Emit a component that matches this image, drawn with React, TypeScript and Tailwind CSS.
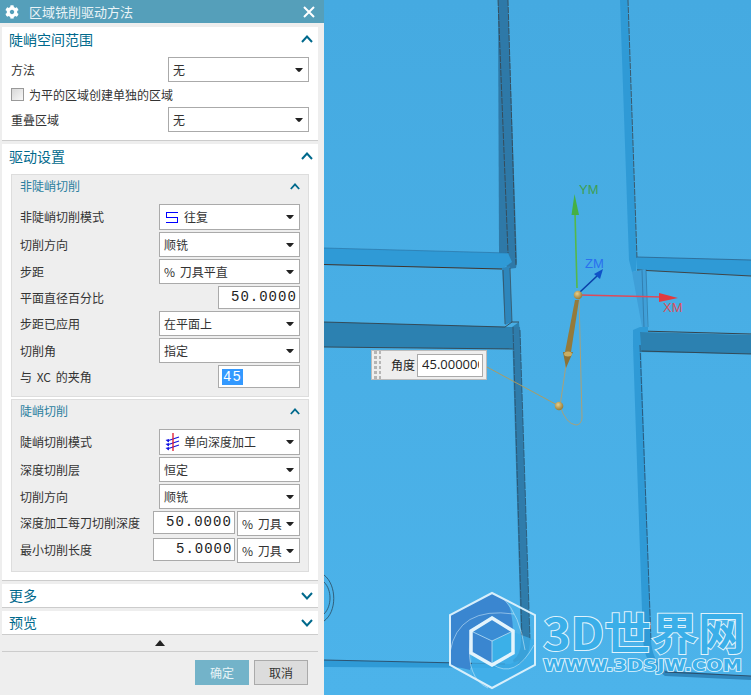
import React from 'react';
import { FaCog } from 'react-icons/fa';

const Chevron = ({ up = true, small = false }: { up?: boolean; small?: boolean }) => (
  <svg width={small ? 10 : 12} height={small ? 7 : 8} viewBox="0 0 12 8" fill="none" stroke="#00698c" strokeWidth={small ? 2.2 : 2}>
    <polyline points={up ? '1,7 6,1.5 11,7' : '1,1 6,6.5 11,1'} />
  </svg>
);

const Caret = () => (
  <svg width="8" height="4" viewBox="0 0 8 4" className="shrink-0">
    <path d="M0 0H8L5 3.6Q4 4.2 3 3.6Z" fill="#222" />
  </svg>
);

const ZigzagIcon = () => (
  <svg width="12" height="11" viewBox="0 0 12 11" className="ml-[2px] mr-[6px] shrink-0" fill="none" stroke="#0000ff" strokeWidth="1" shapeRendering="crispEdges">
    <path d="M12 0.5H0.5V5.5H11.5V10.5H0" />
  </svg>
);

const ProfileIcon = () => (
  <svg width="15" height="18" viewBox="0 0 15 18" className="ml-[1px] mr-[4px] shrink-0" fill="none">
    <path d="M2 8L14 4M2 12L14 8M2 16L14 12" stroke="#1414e0" strokeWidth="1.2" />
    <path d="M0.5 7L4 6V9.5ZM0.5 11L4 10V13.5ZM0.5 15L4 14V17.5Z" fill="#1414e0" />
    <path d="M8 0V18" stroke="#e0142a" strokeWidth="1.3" />
  </svg>
);

const Select = ({ value, icon, className = 'w-[141px]', first = false }: { value: string; icon?: React.ReactNode; className?: string; first?: boolean }) => (
  <div className={`${className} ${first ? 'h-[26px]' : 'h-[25px]'} flex items-center bg-white border border-[#aaaaaa] pl-[4px] pr-[5px] shrink-0`}>
    {icon}
    <span className="flex-1 text-[12px] text-[#333] whitespace-nowrap [word-spacing:2px]">{value}</span>
    <Caret />
  </div>
);

const NumberInput = ({ value, offset, className = 'w-[82px]' }: { value: string; offset: string; className?: string }) => (
  <div className={`${className} h-[23px] bg-white border border-[#aaaaaa] pr-[2px] shrink-0`}>
    <div className={`${offset} h-full flex items-center overflow-hidden`}>
      <span className="font-['Liberation_Mono',monospace] text-[14px] tracking-[1px] text-[#222] whitespace-nowrap">{value}</span>
    </div>
  </div>
);

const Row = ({ label, children, top = false }: { label: string; children: React.ReactNode; top?: boolean }) => (
  <div className={`flex justify-between ${top ? 'items-start' : 'items-center'}`}>
    <span className={`text-[12px] text-[#333] whitespace-nowrap [word-spacing:2px] ${top ? 'leading-[23px]' : ''}`}>{label}</span>
    {children}
  </div>
);

const SectionHeader = ({ title, up = true, className = 'h-[30px] pb-[6px]' }: { title: string; up?: boolean; className?: string }) => (
  <div className={`${className} flex items-center justify-between pl-[7px] pr-[5px]`}>
    <span className="text-[14px] text-[#00698c]">{title}</span>
    <Chevron up={up} />
  </div>
);

const Group = ({ title, children }: { title: string; children: React.ReactNode }) => (
  <div className="bg-[#eeeeee] border border-[#dddddd] mx-[9px] px-[8px] pb-[8px]">
    <div className="h-[29px] pb-[7px] flex items-center justify-between">
      <span className="text-[12px] text-[#2b7f9f]">{title}</span>
      <Chevron small />
    </div>
    <div className="flex flex-col gap-[2px]">{children}</div>
  </div>
);

const Panel = () => (
  <div className="w-[324px] h-full shrink-0 bg-[#eeeeee] flex flex-col font-['Noto_Sans_CJK_SC','Noto_Sans',sans-serif]">
    {/* Title bar */}
    <div className="h-[23px] bg-[#559fba] flex items-center pl-[5px] pr-[9px] text-white shrink-0">
      <FaCog size={14} color="#ffffff" />
      <span className="ml-[10px] flex-1 text-[13px] text-[#eaf4f7]">区域铣削驱动方法</span>
      <svg width="12" height="12" viewBox="0 0 12 12" stroke="#ffffff" strokeWidth="2">
        <path d="M1 1L11 11M11 1L1 11" />
      </svg>
    </div>

    {/* 陡峭空间范围 */}
    <div className="mt-[4px] mx-[2px] w-[316px] h-[114px] bg-white border-b border-[#cccccc] shrink-0">
      <SectionHeader title="陡峭空间范围" />
      <div className="px-[9px]">
        <Row label="方法"><Select value="无" /></Row>
        <div className="h-[25px] flex items-center">
          <div className="w-[13px] h-[13px] border border-[#999999] bg-gradient-to-br from-[#d8d8d8] to-[#f8f8f8]" />
          <span className="ml-[5px] text-[12px] text-[#333]">为平的区域创建单独的区域</span>
        </div>
        <Row label="重叠区域"><Select value="无" /></Row>
      </div>
    </div>

    {/* 驱动设置 */}
    <div className="mt-[3px] mx-[2px] w-[316px] bg-white border-b border-[#cccccc] pb-[8px] shrink-0">
      <SectionHeader title="驱动设置" />
      <div className="flex flex-col gap-[2px]">
        <Group title="非陡峭切削">
          <Row label="非陡峭切削模式"><Select first value="往复" icon={<ZigzagIcon />} /></Row>
          <Row label="切削方向"><Select value="顺铣" /></Row>
          <Row label="步距"><Select value="% 刀具平直" /></Row>
          <Row label="平面直径百分比"><NumberInput value="50.00000" offset="pl-[12px]" /></Row>
          <Row label="步距已应用"><Select value="在平面上" /></Row>
          <Row label="切削角"><Select value="指定" /></Row>
          <Row label="与 XC 的夹角">
            <div className="w-[82px] h-[23px] bg-white border border-[#aaaaaa] flex items-center pl-[3px] shrink-0">
              <span className="bg-[#3399ff] text-white font-['Liberation_Mono',monospace] text-[14px] tracking-[1px] leading-[16px] px-[1px]">45</span>
            </div>
          </Row>
        </Group>
        <Group title="陡峭切削">
          <Row label="陡峭切削模式"><Select first value="单向深度加工" icon={<ProfileIcon />} /></Row>
          <Row label="深度切削层"><Select value="恒定" /></Row>
          <Row label="切削方向"><Select value="顺铣" /></Row>
          <Row top label="深度加工每刀切削深度">
            <div className="flex gap-[2px]">
              <NumberInput value="50.00000" offset="pl-[12px]" />
              <Select value="% 刀具" className="w-[63px]" />
            </div>
          </Row>
          <Row top label="最小切削长度">
            <div className="flex gap-[2px]">
              <NumberInput value="5.00000" offset="pl-[22px]" />
              <Select value="% 刀具" className="w-[63px]" />
            </div>
          </Row>
        </Group>
      </div>
    </div>

    {/* Collapsed sections */}
    <div className="mt-[3px] mx-[2px] w-[316px] bg-white border-b border-[#cccccc] shrink-0">
      <SectionHeader title="更多" up={false} className="h-[23px]" />
    </div>
    <div className="mt-[3px] mx-[2px] w-[316px] bg-white border-b border-[#cccccc] shrink-0">
      <SectionHeader title="预览" up={false} className="h-[23px]" />
    </div>

    <div className="h-[17px] mx-[2px] w-[316px] flex items-center justify-center border-b border-[#cccccc] shrink-0">
      <svg width="10" height="6" viewBox="0 0 10 6"><path d="M5 0L10 6H0Z" fill="#222" /></svg>
    </div>

    {/* Buttons */}
    <div className="mt-[8px] flex justify-end gap-[5px] pr-[16px]">
      <div className="w-[54px] h-[25px] bg-[#73b3c9] flex items-center justify-center text-[12px] text-[#e8f3f7]">确定</div>
      <div className="w-[54px] h-[25px] bg-[#dcdcdc] border border-[#aaaaaa] flex items-center justify-center text-[12px] text-[#333]">取消</div>
    </div>
  </div>
);

// CAD part and manipulator, viewBox keeps the screenshot's own x values
const Model = () => (
  <svg width="427" height="695" viewBox="324 0 427 695" className="absolute inset-0">
    <defs>
      <linearGradient id="sky" x1="0" y1="0" x2="0" y2="1">
        <stop offset="0" stopColor="#45aae1" />
        <stop offset="1" stopColor="#4cb3ea" />
      </linearGradient>
      <radialGradient id="ball" cx="0.4" cy="0.35" r="0.7">
        <stop offset="0" stopColor="#e8cf8a" />
        <stop offset="1" stopColor="#8f7430" />
      </radialGradient>
    </defs>
    <rect x="324" y="0" width="427" height="695" fill="url(#sky)" />

    {/* left channel */}
    <path d="M498 0H508L517 262L516 268L508 269L499 253Z" fill="#2e79a8" />
    <path d="M498 0L508 253M508 0L516 265" stroke="#3a3a3a" strokeWidth="0.7" strokeDasharray="6 1" fill="none" />
    <path d="M324 248L508 253L512 262L502 269L324 265Z" fill="#2f9ad6" />
    <path d="M324 264.5L502 269" stroke="#40352e" strokeWidth="1" />
    <path d="M324 248L508 253" stroke="#2a6f9e" strokeWidth="0.6" />
    <path d="M502 268L510 266L512 322L505 325Z" fill="#2d86bc" />
    <path d="M503 270L505 324M510 268L512 322" stroke="#3a3a3a" strokeWidth="0.6" fill="none" />

    <path d="M324 322L512 327L519 322L521 349L324 347Z" fill="#2c81b1" />
    <path d="M324 322L505 327L512 322H519M324 347L513 349" stroke="#33383c" strokeWidth="0.8" fill="none" />
    <path d="M512 327H520L530 640Q530 660 515 667L513 660Q521 655 521 640Z" fill="#2f7cab" />
    <path d="M513 327L522 640M520 330L530 640" stroke="#2b4a60" strokeWidth="0.7" strokeDasharray="7 1" fill="none" />
    <path d="M324 660L510 664L520 660L515 668L324 667Z" fill="#2f9ad6" />
    <path d="M324 660L505 664" stroke="#2a3f55" strokeWidth="0.8" />

    {/* right channel */}
    <path d="M620 0H628L637 258L636 271L632 272L629 260Z" fill="#2f9ad6" />
    <path d="M628 0L637 258" stroke="#3d3a3a" strokeWidth="0.7" strokeDasharray="6 1" fill="none" />
    <path d="M637 257L751 260V276L637 270Z" fill="#2f9ad6" />
    <path d="M637 257L751 260" stroke="#2b5a80" strokeWidth="0.7" />
    <path d="M637 270L751 276" stroke="#3f3a36" strokeWidth="0.9" />
    <path d="M632 272L646 269L647 327L642 327Z" fill="#3f9fd8" />
    <path d="M642 270L644 328M646 269L648 327" stroke="#2a6a96" strokeWidth="0.6" fill="none" />
    <path d="M640 332L751 335V354L640 352Z" fill="#2c81b1" />
    <path d="M640 331L751 334" stroke="#33383c" strokeWidth="0.9" />
    <path d="M640 351L751 354" stroke="#33383c" strokeWidth="0.8" />
    <path d="M633 330L640 327L648 327V332L640 332L641 345L651 640Q652 660 665 670L660 673Q645 665 643 640L633 345Z" fill="#2f9ad6" />
    <path d="M640 345L651 640" stroke="#2b3f55" strokeWidth="0.7" strokeDasharray="7 1" fill="none" />
    <path d="M657 670L751 676V680L665 676Z" fill="#2f86bc" />
    <path d="M665 672L751 676" stroke="#2a3f55" strokeWidth="0.8" />

    {/* arc at the panel edge */}
    <path d="M324 575C337 585 337 612 324 621M324 582C332 590 332 606 324 614" stroke="#2b4a60" strokeWidth="0.8" fill="none" />

    {/* angle handle */}
    <path d="M487 367L559 406" stroke="#b79a55" strokeWidth="0.9" />
    <path d="M566 365L560 406Q566 424 576 425Q581 425 582 418L579 298" stroke="#a8a17a" strokeWidth="1" fill="none" />
    <path d="M575 300H579L571 352H565Z" fill="#957a3a" />
    <path d="M563 352H573L566 368Z" fill="#8d7234" />
    <ellipse cx="568" cy="354" rx="4" ry="2.5" fill="#c9ad62" />

    {/* YM */}
    <path d="M577 288L575 213" stroke="#55b848" strokeWidth="1.6" />
    <path d="M574.5 194L579 215H571.5Z" fill="#45b044" />
    <text x="579" y="194" fontSize="13" fill="#3f9f52" fontFamily="Liberation Sans, sans-serif">YM</text>
    {/* ZM */}
    <path d="M580 292L597 276" stroke="#0a3fa8" strokeWidth="1.5" />
    <path d="M603 269L600 279L594 274Z" fill="#0f52c8" />
    <text x="585" y="268" fontSize="13" fill="#2a70ee" fontFamily="Liberation Sans, sans-serif">ZM</text>
    {/* XM */}
    <path d="M580 295L662 297" stroke="#de4a5a" strokeWidth="1.6" />
    <path d="M678 298L659 302V293Z" fill="#e23a3e" />
    <text x="663" y="312" fontSize="13" fill="#d9505c" fontFamily="Liberation Sans, sans-serif">XM</text>

    <circle cx="578" cy="295" r="4.3" fill="url(#ball)" />
    <circle cx="559" cy="406" r="4.3" fill="url(#ball)" />
  </svg>
);

// 3D世界网 watermark
const Watermark = () => (
  <svg width="306" height="105" viewBox="445 590 306 105" className="absolute left-[121px] top-[590px]">
    <path d="M513 632L535 640V665L492 688L472 677L472 655L492 666Z" fill="#3eaee8" fillOpacity="0.75" />
    <path d="M492 593L450 615V665L470 670L470 630L492 616L513 630Q512 606 505 600Z" fill="#3a86d0" />
    <path d="M492 593L535 615V665L492 688L450 665V615Z" fill="none" stroke="#d8effb" strokeWidth="2" />
    <path d="M503 598Q520 615 525 650M450 652Q458 606 514 614M470 640Q466 678 488 688M492 664Q515 680 534 645" stroke="#d8effb" strokeWidth="0.8" fill="none" opacity="0.65" />
    <path d="M492 641L513 631V653L492 665Z" fill="#3bb0e8" />
    <path d="M492 641L471 631V653L492 665Z" fill="#3a86d0" />
    <path d="M492 641L513 631L492 618L471 631Z" fill="#3a8cd4" />
    <path d="M492 641L513 631M492 641L471 631M492 641V665" stroke="#cbe8f8" strokeWidth="0.7" />
    <path d="M492 618L513 631V653L492 665L471 653V631Z" fill="none" stroke="#e4f4fc" strokeWidth="3.5" />
    <text x="543" y="650" fontSize="44" fontWeight="700" fill="#3aaee8" stroke="#dff2fc" strokeWidth="2" paintOrder="stroke" fontFamily="Noto Sans CJK SC, sans-serif" textLength="202" lengthAdjust="spacingAndGlyphs">3D世界网</text>
    <text x="543" y="671" fontSize="15" fontWeight="700" fill="#3aaee8" stroke="#dff2fc" strokeWidth="1.6" paintOrder="stroke" fontFamily="DejaVu Sans, sans-serif" textLength="199" lengthAdjust="spacingAndGlyphs">WWW.3DSJW.COM</text>
  </svg>
);

const AnglePopup = () => (
  <div className="absolute left-[47px] top-[350px] w-[116px] h-[30px] bg-[#eeeeee] border border-[#bbbbbb] flex items-center pl-[2px] pr-[3px] font-['Noto_Sans_CJK_SC',sans-serif]">
    <div className="grid grid-cols-2 gap-[2px] w-[7px] mr-[10px] shrink-0">
      {Array.from({ length: 12 }).map((_, i) => (
        <div key={i} className="w-[2.5px] h-[3px] bg-[#b5b5b5]" />
      ))}
    </div>
    <span className="text-[12px] text-[#222] whitespace-nowrap">角度</span>
    <div className="ml-[2px] w-[66px] h-[23px] bg-white border border-[#aaaaaa] pl-[4px] pr-[3px] shrink-0">
      <div className="h-full flex items-center overflow-hidden">
        <span className="font-['Open_Sans',sans-serif] text-[13px] text-[#222] whitespace-nowrap">45.000000</span>
      </div>
    </div>
  </div>
);

const App: React.FC = () => {
  return (
    <div className="w-[751px] h-[695px] flex overflow-hidden">
      <Panel />
      <div className="relative flex-1 h-full">
        <Model />
        <AnglePopup />
        <Watermark />
      </div>
    </div>
  );
};

export default App;
